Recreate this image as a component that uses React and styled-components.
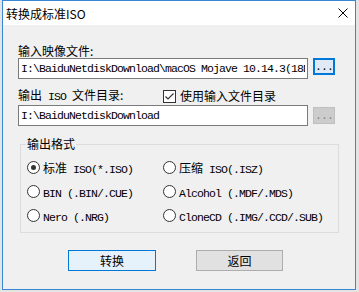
import styled, { createGlobalStyle } from "styled-components";

const GlobalStyle = createGlobalStyle`
    html, body {
        margin: 0;
        padding: 0;
        background: #e4e4e4;
    }
    body {
        font-family: "Noto Sans CJK SC", sans-serif;
        font-size: 12px;
        color: #000;
    }
`

export default function App() {
    return (
        <>
            <GlobalStyle />
            <Window>
                <TitleBar>
                    <span>转换成标准ISO</span>
                    <svg width="10" height="10" viewBox="0 0 10 10">
                        <path d="M0.5 0.5 L9.5 9.5 M9.5 0.5 L0.5 9.5" stroke="#000" strokeWidth="1" />
                    </svg>
                </TitleBar>

                <Body>
                    <Label>输入映像文件:</Label>
                    <InputRow>
                        <TextBox readOnly value="I:\BaiduNetdiskDownload\macOS Mojave 10.14.3(18D42).dmg" />
                        <Browse focused><M>...</M></Browse>
                    </InputRow>

                    <OptionRow>
                        <RowLabel>输出<M> ISO </M>文件目录:</RowLabel>
                        <Check>
                            <svg width="11" height="11" viewBox="0 0 11 11">
                                <path d="M1.5 5.5 L4 8 L9.5 2.5" stroke="#333" strokeWidth="1.2" fill="none" />
                            </svg>
                        </Check>
                        <span>使用输入文件目录</span>
                    </OptionRow>
                    <InputRow second>
                        <TextBox readOnly value="I:\BaiduNetdiskDownload" />
                        <Browse disabled><M>...</M></Browse>
                    </InputRow>

                    <Group>
                        <Legend>输出格式</Legend>
                        <RadioGrid>
                            <RadioItem><Radio checked /><span>标准<M> ISO(*.ISO)</M></span></RadioItem>
                            <RadioItem><Radio /><span>压缩<M> ISO(.ISZ)</M></span></RadioItem>
                            <RadioItem><Radio /><span><M>BIN (.BIN/.CUE)</M></span></RadioItem>
                            <RadioItem><Radio /><span><M>Alcohol (.MDF/.MDS)</M></span></RadioItem>
                            <RadioItem><Radio /><span><M>Nero (.NRG)</M></span></RadioItem>
                            <RadioItem><Radio /><span><M>CloneCD (.IMG/.CCD/.SUB)</M></span></RadioItem>
                        </RadioGrid>
                    </Group>

                    <ButtonRow>
                        <DialogButton primary>转换</DialogButton>
                        <DialogButton>返回</DialogButton>
                    </ButtonRow>
                </Body>
            </Window>
        </>
    )
}

const Window = styled.div`
    box-sizing: border-box;
    width: 354px;
    height: 290px;
    margin-left: 2px;
    border: 1px solid #3a86d6;
    display: flex;
    flex-direction: column;
    background: #f0f0f0;
`

const TitleBar = styled.div`
    height: 24px;
    background: #fff;
    display: flex;
    align-items: center;
    justify-content: space-between;
    padding: 0 7px 0 3px;
    font-size: 12px;
`

const Body = styled.div`
    flex: 1;
    display: flex;
    flex-direction: column;
    padding-left: 15px;
`

const M = styled.span`
    font-family: "Liberation Mono", monospace;
    font-size: 11.5px;
    letter-spacing: -0.9px;
`

const Label = styled.div`
    margin-top: 19px;
    line-height: 14px;
    height: 14px;
`

const InputRow = styled.div`
    display: flex;
    align-items: flex-start;
    margin-top: ${props => props.second ? '2px' : '0'};
`

const TextBox = styled.input`
    box-sizing: border-box;
    width: 290px;
    height: 21px;
    margin: 0;
    padding: 0 2px;
    border: 1px solid #7a7a7a;
    background: #fff;
    outline: none;
    font-family: "Liberation Mono", monospace;
    font-size: 11.5px;
    letter-spacing: -0.9px;
    color: #000;
`

const Browse = styled.button`
    box-sizing: border-box;
    width: 22px;
    height: 17px;
    margin: ${props => props.disabled ? '2px' : '0'} 0 0 5px;
    padding: 0;
    display: flex;
    align-items: center;
    justify-content: center;
    border: 1px solid ${props => props.disabled ? '#bfbfbf' : '#0078d7'};
    box-shadow: ${props => props.focused ? 'inset 0 0 0 1px #0078d7' : 'none'};
    background: ${props => props.disabled ? '#cccccc' : '#dfeaf6'};
    color: ${props => props.disabled ? '#838383' : '#000'};
    line-height: 1;
`

const OptionRow = styled.div`
    display: flex;
    align-items: center;
    height: 14px;
    margin-top: 10px;
    line-height: 14px;
`

const RowLabel = styled.span`
    width: 145px;
`

const Check = styled.span`
    box-sizing: border-box;
    width: 13px;
    height: 13px;
    border: 1px solid #333;
    background: #fff;
    display: flex;
    align-items: center;
    justify-content: center;
    margin-right: 4px;
`

const Group = styled.fieldset`
    box-sizing: border-box;
    width: 319px;
    margin: 11px 0 0 2px;
    padding: 4px 0 5px 6px;
    border: 1px solid #dcdcdc;
    min-inline-size: 0;
`

const Legend = styled.legend`
    padding: 0 1px;
    margin-left: -1px;
    line-height: 14px;
    font-size: 12px;
`

const RadioGrid = styled.div`
    display: grid;
    grid-template-columns: 136px 1fr;
    grid-auto-rows: 24px;
`

const RadioItem = styled.div`
    display: flex;
    align-items: center;
    white-space: nowrap;
`

const Radio = styled.span`
    box-sizing: border-box;
    width: 13px;
    height: 13px;
    border-radius: 50%;
    border: 1px solid #333;
    background: #fff;
    margin-right: 3px;
    display: flex;
    align-items: center;
    justify-content: center;

    &::after {
        content: "";
        width: 5px;
        height: 5px;
        border-radius: 50%;
        background: ${props => props.checked ? '#333' : 'transparent'};
    }
`

const ButtonRow = styled.div`
    display: flex;
    gap: 40px;
    margin: 17px 0 0 50px;
`

const DialogButton = styled.button`
    box-sizing: border-box;
    width: ${props => props.primary ? '88px' : '87px'};
    height: 21px;
    padding: 0;
    border: 1px solid ${props => props.primary ? '#0078d7' : '#adadad'};
    background: ${props => props.primary ? '#e5f1fb' : '#e1e1e1'};
    font-family: "Noto Sans CJK SC", sans-serif;
    font-size: 12px;
    color: #000;
    line-height: 1;
`
